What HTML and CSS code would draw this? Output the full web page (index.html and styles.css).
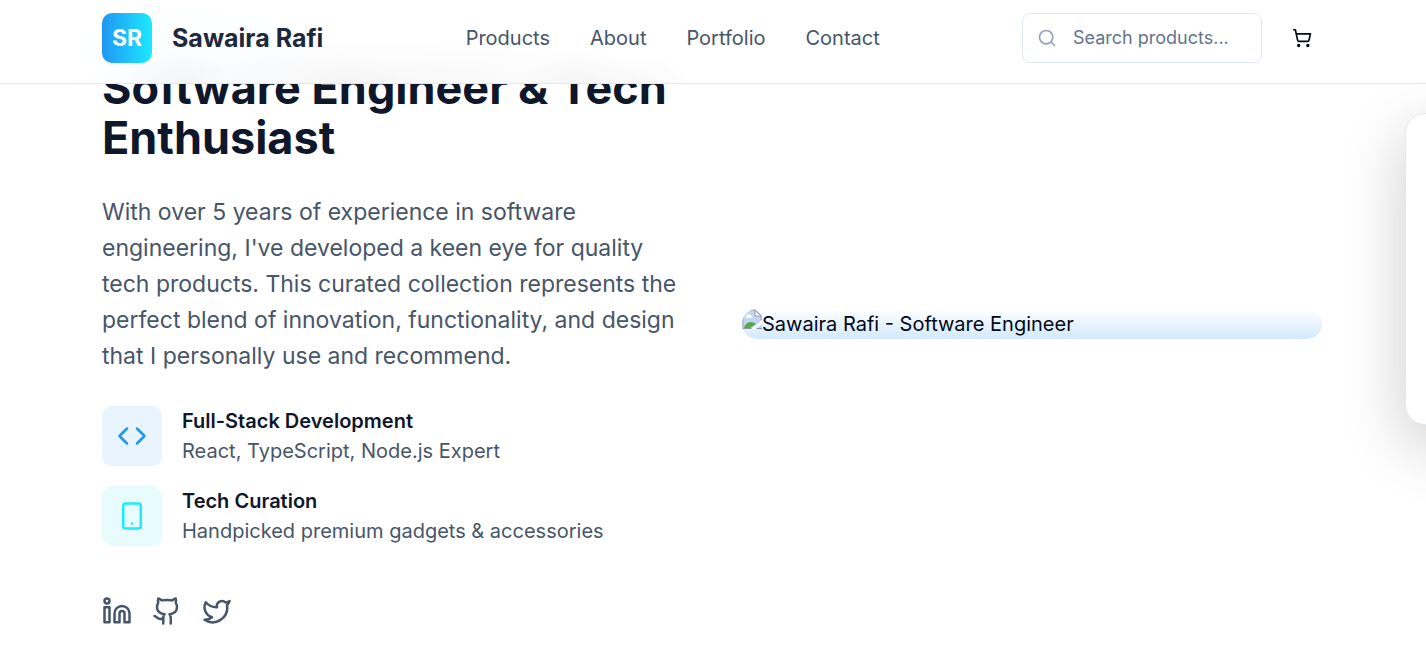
FILE: index.html
```html
<!DOCTYPE html>
<html lang="en">
<head>
<meta charset="utf-8">
<meta name="viewport" content="width=device-width, initial-scale=1">
<title>Sawaira Rafi</title>
<link rel="stylesheet" href="styles.css">
</head>
<body>
<header class="header">
  <div class="brand">
    <span class="logo">SR</span>
    <span class="brand-name">Sawaira Rafi</span>
  </div>
  <nav class="nav">
    <a href="#products">Products</a>
    <a href="#about">About</a>
    <a href="#portfolio">Portfolio</a>
    <a href="#contact">Contact</a>
  </nav>
  <div class="actions">
    <label class="search">
      <svg class="icon-small" viewBox="0 0 24 24" aria-hidden="true"><circle cx="11" cy="11" r="8"/><path d="m21 21-4.3-4.3"/></svg>
      <input type="search" placeholder="Search products..." aria-label="Search products">
    </label>
    <button class="cart-button" type="button" aria-label="Open cart">
      <svg class="icon-small" viewBox="0 0 24 24" aria-hidden="true"><circle cx="8" cy="21" r="1"/><circle cx="19" cy="21" r="1"/><path d="M2.05 2.05h2l2.66 12.42a2 2 0 0 0 2 1.58h9.78a2 2 0 0 0 1.95-1.57l1.65-7.43H5.12"/></svg>
    </button>
  </div>
</header>

<main class="hero" id="about">
  <section class="intro">
    <h1>Software Engineer &amp; Tech Enthusiast</h1>
    <p class="bio">With over 5 years of experience in software engineering, I've developed a keen eye for quality tech products. This curated collection represents the perfect blend of innovation, functionality, and design that I personally use and recommend.</p>
    <div class="skills">
      <div class="skill">
        <span class="skill-icon skill-icon-blue"><svg class="icon" viewBox="0 0 24 24" aria-hidden="true"><path d="m16 18 6-6-6-6"/><path d="m8 6-6 6 6 6"/></svg></span>
        <div>
          <h2>Full-Stack Development</h2>
          <p>React, TypeScript, Node.js Expert</p>
        </div>
      </div>
      <div class="skill">
        <span class="skill-icon skill-icon-cyan"><svg class="icon" viewBox="0 0 24 24" aria-hidden="true"><rect x="5" y="2" width="14" height="20" rx="2"/><path d="M12 18h.01"/></svg></span>
        <div>
          <h2>Tech Curation</h2>
          <p>Handpicked premium gadgets &amp; accessories</p>
        </div>
      </div>
    </div>
    <div class="social">
      <a href="#linkedin" aria-label="LinkedIn"><svg class="icon" viewBox="0 0 24 24" aria-hidden="true"><path d="M16 8a6 6 0 0 1 6 6v7h-4v-7a2 2 0 0 0-4 0v7h-4v-7a6 6 0 0 1 6-6z"/><rect x="2" y="9" width="4" height="12"/><circle cx="4" cy="4" r="2"/></svg></a>
      <a href="#github" aria-label="GitHub"><svg class="icon" viewBox="0 0 24 24" aria-hidden="true"><path d="M15 22v-4a4.8 4.8 0 0 0-1-3.5c3 0 6-2 6-5.5.08-1.25-.27-2.48-1-3.5.28-1.15.28-2.35 0-3.5 0 0-1 0-3 1.5-2.64-.5-5.36-.5-8 0C6 2 5 2 5 2c-.3 1.15-.3 2.35 0 3.5A5.403 5.403 0 0 0 4 9c0 3.5 3 5.5 6 5.5-.39.49-.68 1.05-.85 1.65-.17.6-.22 1.23-.15 1.85v4"/><path d="M9 18c-4.51 2-5-2-7-2"/></svg></a>
      <a href="#twitter" aria-label="Twitter"><svg class="icon" viewBox="0 0 24 24" aria-hidden="true"><path d="M22 4s-.7 2.1-2 3.4c1.6 10-9.4 17.3-18 11.6 2.2.1 4.4-.6 6-2C3 15.5.5 9.6 3 5c2.2 2.6 5.6 4.1 9 4-.9-4.2 4-6.6 7-3.8 1.100 0 3-1.200 3-1.200z"/></svg></a>
    </div>
  </section>
  <div class="portrait" role="img" aria-label="Sawaira Rafi - Software Engineer">
    <svg class="missing" viewBox="0 0 20 20" aria-hidden="true">
      <path d="M0 0h13l7 6v14H0z" fill="#c3d5f5"/>
      <path d="M0 1h13l6 6v4M1 0v20" fill="none" stroke="#a6a6a6"/>
      <path d="M13 1v6h6z" fill="#fff" stroke="#9a9a9a"/>
      <path d="M4 8c0-3 4-4 5-1 2 0 2 2 1 2H4z" fill="#fff"/>
      <path d="M2 19c1-4 4-6 7-6 2 0 4 1 5 2l-6 4z" fill="#55aa45"/>
      <path d="M0 19h20v1H0z" fill="#8f969c"/>
      <path d="M9 20 20 11v4l-6 5z" fill="#f4faff"/>
    </svg>
    <span>Sawaira Rafi - Software Engineer</span>
  </div>
</main>
<aside class="drawer" aria-hidden="true"></aside>
</body>
</html>
```

FILE: styles.css
```css
* { box-sizing: border-box; }

body {
  margin: 0;
  overflow: hidden;
  background: #fff;
  color: #0f172a;
  font: 20px/30px Inter, sans-serif;
}

h1, h2, p { margin: 0; }
a { color: #475569; text-decoration: none; }
button, input { font: inherit; }

.icon, .icon-small {
  display: block;
  flex: none;
  fill: none;
  stroke: currentColor;
  stroke-width: 2;
  stroke-linecap: round;
  stroke-linejoin: round;
}
.icon { width: 30px; height: 30px; }
.icon-small { width: 20px; height: 20px; }

.header {
  position: fixed;
  inset: 0 0 auto;
  z-index: 2;
  display: flex;
  align-items: center;
  justify-content: space-between;
  padding: 13px 104px 20px 102px;
  border-bottom: 1px solid #e2e8f0;
  background:
    radial-gradient(60px 30px at 175px 100%, rgba(15, 23, 42, 0.03), transparent),
    radial-gradient(60px 30px at 345px 100%, rgba(15, 23, 42, 0.02), transparent),
    radial-gradient(60px 34px at 580px 100%, rgba(15, 23, 42, 0.03), transparent),
    radial-gradient(50px 30px at 645px 100%, rgba(15, 23, 42, 0.02), transparent),
    radial-gradient(320px 45px at 385px 100%, rgba(15, 23, 42, 0.03), transparent),
    radial-gradient(160px 60px at 190px 50px, rgba(33, 150, 243, 0.02), transparent),
    #fff;
}

.brand { display: flex; align-items: center; gap: 20px; }
.logo {
  display: grid;
  place-items: center;
  width: 50px;
  height: 50px;
  border-radius: 10px;
  background: linear-gradient(90deg, #2196f3, #1de9ff);
  color: #fff;
  font-size: 23px;
  font-weight: 700;
}
.brand-name { color: #1e293b; font-size: 25px; font-weight: 700; }

.nav { display: flex; gap: 40px; }

.actions { display: flex; align-items: center; gap: 20px; }
.search {
  display: flex;
  align-items: center;
  gap: 16px;
  width: 240px;
  height: 50px;
  padding: 0 14px;
  border: 1px solid #e2e8f0;
  border-radius: 8px;
  background: #fff;
  color: #94a3b8;
}
.search input {
  min-width: 0;
  flex: 1;
  padding: 0;
  border: 0;
  outline: 0;
  background: transparent;
  color: #0f172a;
  font-size: 18px;
}
.search input::placeholder { color: #64748b; opacity: 1; }
.cart-button {
  display: grid;
  place-items: center;
  width: 40px;
  height: 40px;
  padding: 0;
  border: 0;
  background: transparent;
  color: #020817;
}

.hero {
  display: grid;
  grid-template-columns: 1fr 1fr;
  align-items: center;
  gap: 60px;
  padding: 22px 104px 22px 102px;
}
.intro { padding-top: 41px; }
h1 { font-size: 45px; line-height: 50px; font-weight: 700; }
.bio {
  margin-top: 31px;
  color: #475569;
  font-size: 23px;
  line-height: 36px;
}
.skills { display: grid; gap: 20px; margin-top: 32px; }
.skill { display: flex; align-items: center; gap: 20px; }
.skill h2 { font-size: 20px; line-height: 30px; font-weight: 600; }
.skill p { color: #475569; }
.skill-icon {
  display: grid;
  place-items: center;
  width: 60px;
  height: 60px;
  border-radius: 10px;
}
.skill-icon-blue { background: #e8f4fe; color: #2196f3; }
.skill-icon-cyan { background: #e8fcff; color: #1de9ff; }
.social { display: flex; gap: 20px; margin-top: 50px; }

.portrait {
  display: flex;
  overflow: hidden;
  border-radius: 20px;
  background: linear-gradient(0deg, #d2e9fd, #fff);
  color: #020817;
}
.missing { width: 20px; height: 20px; }

.drawer {
  position: fixed;
  top: 113px;
  left: calc(100% - 21px);
  width: 400px;
  height: 312px;
  border: 1px solid #e2e8f0;
  border-radius: 20px;
  background: #fff;
  box-shadow: 0 20px 64px rgba(0, 0, 0, 0.2);
}
```
